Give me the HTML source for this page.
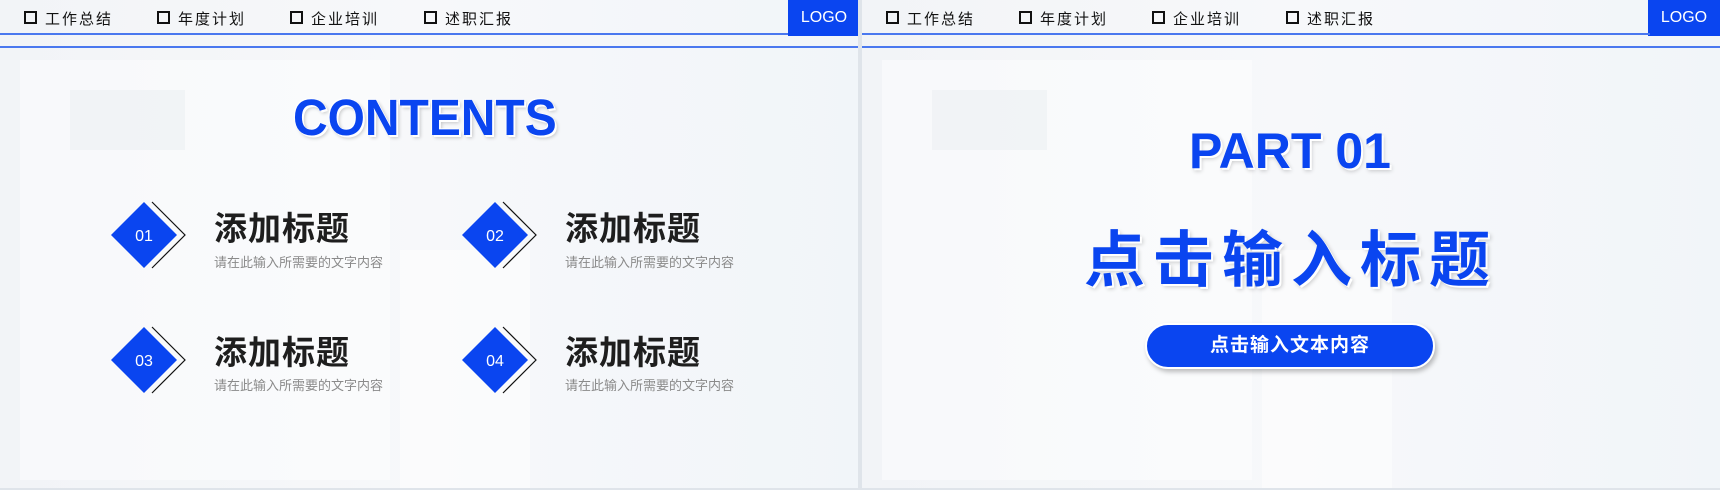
<!DOCTYPE html>
<html><head><meta charset="utf-8"><style>
*{margin:0;padding:0;box-sizing:border-box}
body{width:1720px;height:490px;overflow:hidden;background:#dfe4ea;font-family:"Liberation Sans","Noto Sans CJK SC",sans-serif;position:relative}
.slide{position:absolute;top:0;width:858px;height:488px;overflow:hidden;background:linear-gradient(90deg,#f2f4f7 0%,#f7f8fa 50%,#f1f5f9 100%)}
.bg{position:absolute;background:#fff;opacity:.45}
.bgd{position:absolute;background:#eaedf1;opacity:.5}
.nav{position:absolute;top:0;left:0;width:100%;height:35px}
.nav span{position:absolute;top:8px;font-size:15px;color:#111;letter-spacing:2px}
.nav span:before{content:"";display:inline-block;width:9px;height:9px;border:2px solid #111;margin-right:8px;vertical-align:0}
.logo{position:absolute;left:788px;top:0;width:72px;height:36px;background:#0a45f0;color:#fff;font-size:16px;text-align:center;line-height:36px}
.l1{position:absolute;left:0;top:33px;width:788px;height:2px;background:#4a78ef}
.l2{position:absolute;left:0;top:46px;width:100%;height:2px;background:#4a78ef}
.t{position:absolute;font-size:33px;font-weight:bold;color:#1e1e1e;letter-spacing:1px}
.s{position:absolute;font-size:13px;color:#8a8a8a}
</style></head><body>
<div class="slide" style="left:0">
<div class="bg" style="left:20px;top:60px;width:370px;height:420px"></div>
<div class="bgd" style="left:70px;top:90px;width:115px;height:60px"></div>
<div class="bg" style="left:400px;top:250px;width:130px;height:240px"></div>
<div class="nav"><span style="left:24px">工作总结</span><span style="left:157px">年度计划</span><span style="left:290px">企业培训</span><span style="left:424px">述职汇报</span></div>
<div class="logo">LOGO</div><div class="l1"></div><div class="l2"></div>
<div style="position:absolute;left:293px;top:88px;font-size:51px;font-weight:bold;color:#0a45f0;transform:scaleX(.94);transform-origin:left;text-shadow:2px 2px 0 #fff,-1px -1px 0 #fff,3px 3px 4px rgba(0,0,0,.2)">CONTENTS</div>
<svg style="position:absolute;left:0;top:0" width="858" height="488">
<g fill="none" stroke="#111" stroke-width="1.2"><path d="M152 202 L185 235 L152 268"/><path d="M503 202 L536 235 L503 268"/><path d="M152 327 L185 360 L152 393"/><path d="M503 327 L536 360 L503 393"/></g>
<g fill="#0a45f0"><path d="M144 202L177 235L144 268L111 235Z"/><path d="M495 202L528 235L495 268L462 235Z"/><path d="M144 327L177 360L144 393L111 360Z"/><path d="M495 327L528 360L495 393L462 360Z"/></g>
<g fill="#fff" font-size="16" font-family="Liberation Sans" text-anchor="middle"><text x="144" y="241">01</text><text x="495" y="241">02</text><text x="144" y="366">03</text><text x="495" y="366">04</text></g>
</svg>
<div class="t" style="left:214px;top:202px">添加标题</div><div class="s" style="left:214px;top:252px">请在此输入所需要的文字内容</div>
<div class="t" style="left:565px;top:202px">添加标题</div><div class="s" style="left:565px;top:252px">请在此输入所需要的文字内容</div>
<div class="t" style="left:214px;top:326px">添加标题</div><div class="s" style="left:214px;top:375px">请在此输入所需要的文字内容</div>
<div class="t" style="left:565px;top:326px">添加标题</div><div class="s" style="left:565px;top:375px">请在此输入所需要的文字内容</div>
</div>
<div class="slide" style="left:862px">
<div class="bg" style="left:20px;top:60px;width:370px;height:420px"></div>
<div class="bgd" style="left:70px;top:90px;width:115px;height:60px"></div>
<div class="bg" style="left:400px;top:250px;width:130px;height:240px"></div>
<div class="nav"><span style="left:24px">工作总结</span><span style="left:157px">年度计划</span><span style="left:290px">企业培训</span><span style="left:424px">述职汇报</span></div>
<div class="logo" style="left:786px">LOGO</div><div class="l1"></div><div class="l2"></div>
<div style="position:absolute;left:0;width:856px;top:122px;text-align:center;font-size:50px;font-weight:bold;color:#0a45f0;text-shadow:2px 2px 0 #fff,2px 3px 4px rgba(0,0,0,.2)">PART 01</div>
<div style="position:absolute;left:222px;top:210px;font-size:61px;font-weight:bold;color:#0a45f0;letter-spacing:8px;white-space:nowrap;text-shadow:2px 2px 0 #fff,3px 3px 4px rgba(0,0,0,.2)">点击输入标题</div>
<div style="position:absolute;left:283px;top:323px;width:290px;height:46px;border-radius:23px;background:#0a45f0;border:2px solid #fff;box-shadow:2px 3px 5px rgba(0,0,0,.25);color:#fff;font-size:19px;font-weight:bold;text-align:center;line-height:42px;letter-spacing:1px">点击输入文本内容</div>
</div>
</body></html>
